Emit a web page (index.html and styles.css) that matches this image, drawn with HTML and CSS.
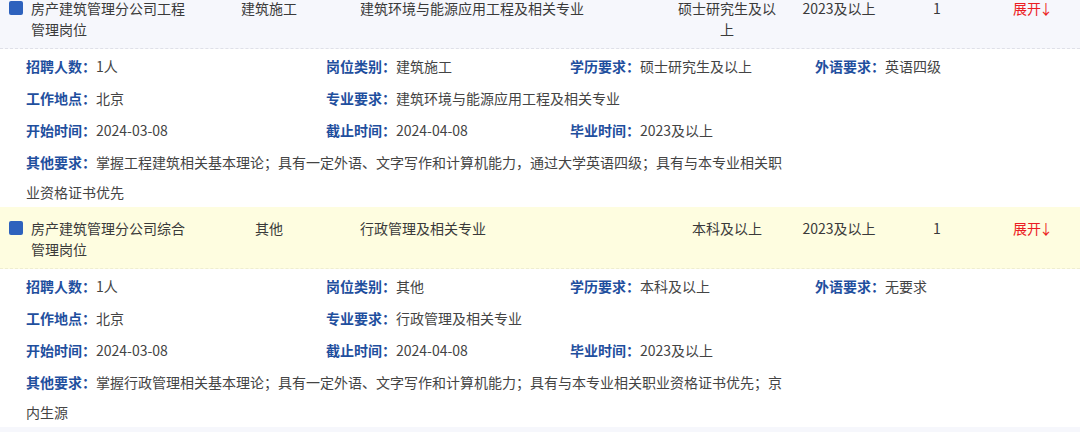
FILE: index.html
```html
<!DOCTYPE html>
<html lang="zh-CN">
<head>
    <meta charset="UTF-8">
    <meta name="viewport" content="width=device-width, initial-scale=1.0">
    <title>岗位列表</title>
    <link rel="stylesheet" href="styles.css">
</head>
<body>
    <div class="job-list">
        <div class="job">
            <div class="job-head">
                <div class="cell icon-cell"><span class="square"></span></div>
                <div class="cell title">房产建筑管理分公司工程管理岗位</div>
                <div class="cell center c-type">建筑施工</div>
                <div class="cell c-major">建筑环境与能源应用工程及相关专业</div>
                <div class="cell center c-edu">硕士研究生及以上</div>
                <div class="cell center c-year">2023及以上</div>
                <div class="cell center c-num">1</div>
                <div class="cell c-toggle"><a class="toggle">展开<span class="arrow">↓</span></a></div>
            </div>
            <div class="job-detail">
                <div class="item"><b>招聘人数：</b>1人</div>
                <div class="item"><b>岗位类别：</b>建筑施工</div>
                <div class="item"><b>学历要求：</b>硕士研究生及以上</div>
                <div class="item"><b>外语要求：</b>英语四级</div>
                <div class="item"><b>工作地点：</b>北京</div>
                <div class="item wide"><b>专业要求：</b>建筑环境与能源应用工程及相关专业</div>
                <div class="item"><b>开始时间：</b>2024-03-08</div>
                <div class="item"><b>截止时间：</b>2024-04-08</div>
                <div class="item full-row"><b>毕业时间：</b>2023及以上</div>
                <div class="item other"><b>其他要求：</b>掌握工程建筑相关基本理论；具有一定外语、文字写作和计算机能力，通过大学英语四级；具有与本专业相关职业资格证书优先</div>
            </div>
        </div>

        <div class="job alt">
            <div class="job-head">
                <div class="cell icon-cell"><span class="square"></span></div>
                <div class="cell title">房产建筑管理分公司综合管理岗位</div>
                <div class="cell center c-type">其他</div>
                <div class="cell c-major">行政管理及相关专业</div>
                <div class="cell center c-edu">本科及以上</div>
                <div class="cell center c-year">2023及以上</div>
                <div class="cell center c-num">1</div>
                <div class="cell c-toggle"><a class="toggle">展开<span class="arrow">↓</span></a></div>
            </div>
            <div class="job-detail">
                <div class="item"><b>招聘人数：</b>1人</div>
                <div class="item"><b>岗位类别：</b>其他</div>
                <div class="item"><b>学历要求：</b>本科及以上</div>
                <div class="item"><b>外语要求：</b>无要求</div>
                <div class="item"><b>工作地点：</b>北京</div>
                <div class="item wide"><b>专业要求：</b>行政管理及相关专业</div>
                <div class="item"><b>开始时间：</b>2024-03-08</div>
                <div class="item"><b>截止时间：</b>2024-04-08</div>
                <div class="item full-row"><b>毕业时间：</b>2023及以上</div>
                <div class="item other"><b>其他要求：</b>掌握行政管理相关基本理论；具有一定外语、文字写作和计算机能力；具有与本专业相关职业资格证书优先；京内生源</div>
            </div>
        </div>

        <div class="job">
            <div class="job-head"></div>
        </div>
    </div>
</body>
</html>
```

FILE: styles.css
```css
body {
    margin: 0;
    background: #fff;
    font-family: "Noto Sans CJK SC", "Noto Sans", sans-serif;
    font-size: 14px;
    color: #3a3a3a;
    overflow: hidden;
}

/* the screenshot starts part way into the first row */
.job-list {
    margin-top: -13px;
}

.job-head {
    display: grid;
    grid-template-columns: 31px 178px 120px 346px 104px 120px 76px 1fr;
    align-items: start;
    padding: 11px 0 8px;
    line-height: 21px;
    background-color: #f6f7fc;
    border-bottom: 1px dashed #dfe0e8;
    min-height: 42px;
}

.job.alt .job-head {
    background-color: #fefde0;
    border-bottom-color: #efeed0;
}

.icon-cell {
    padding-left: 9px;
    padding-top: 3px;
}

.square {
    display: block;
    width: 14px;
    height: 14px;
    border-radius: 2px;
    background-color: #2e62bd;
}

.title {
    padding-right: 18px;
}

.center {
    text-align: center;
}

.c-major {
    padding-left: 31px;
}

.c-toggle {
    padding-left: 38px;
}

.toggle {
    color: #ec1c24;
    cursor: pointer;
}

.toggle .arrow {
    margin-left: -2px;
}

.job-detail {
    display: grid;
    grid-template-columns: 300px 244px 245px 1fr;
    row-gap: 2px;
    padding: 2px 0 0 26px;
    line-height: 30px;
    color: #444;
}

.item b {
    color: #1f4f9e;
    font-weight: bold;
}

.item.wide {
    grid-column: span 3;
}

.item.full-row {
    grid-column: span 2;
}

.item.other {
    grid-column: 1 / -1;
    max-width: 760px;
}
```
